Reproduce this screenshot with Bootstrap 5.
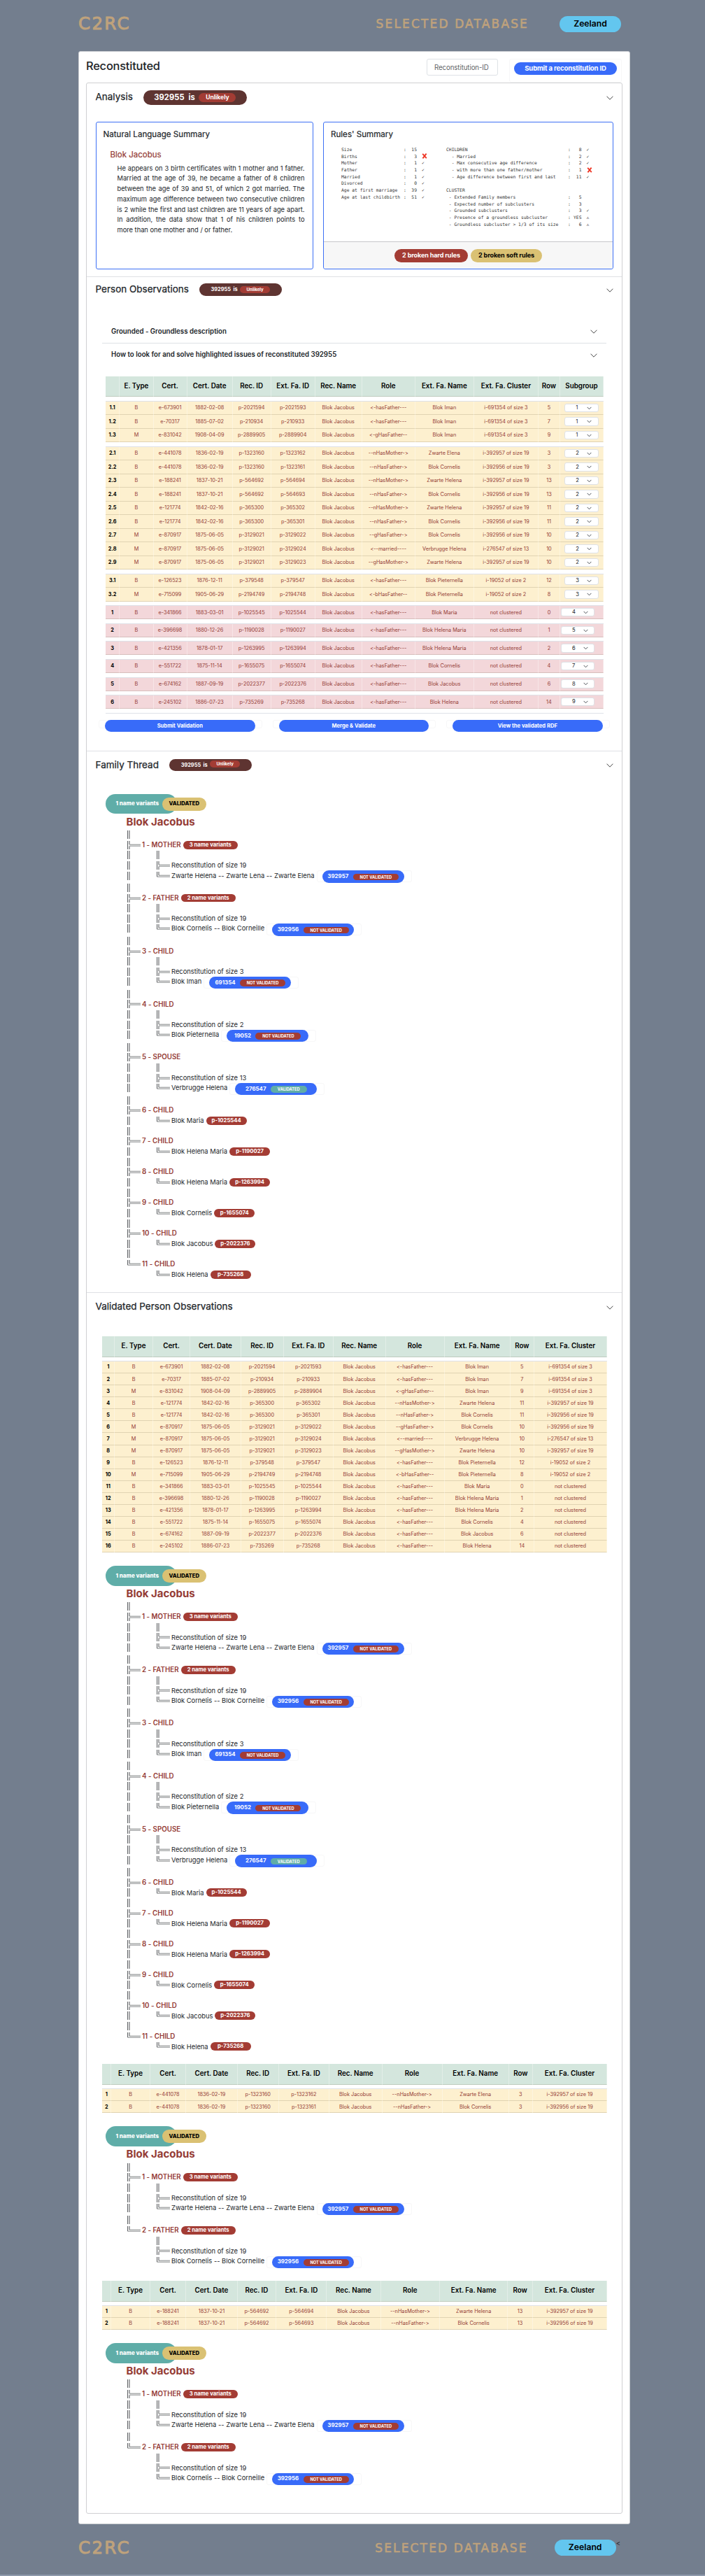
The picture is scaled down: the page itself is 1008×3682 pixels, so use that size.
<!DOCTYPE html>
<html lang="en">
<head>
<meta charset="utf-8">
<meta name="viewport" content="width=device-width, initial-scale=1">
<title>C2RC - Reconstituted 392955</title>
<link href="https://cdn.jsdelivr.net/npm/bootstrap@5.3.0/dist/css/bootstrap.min.css" rel="stylesheet">
<style>
body{background:#737e8e;font-family:Inter,"Liberation Sans",sans-serif;color:#212529;font-size:9.6px;line-height:1.2;font-feature-settings:"calt" 0}
.topbar{height:73px;width:789px;margin:0 auto 0 112px;padding-right:13px}
.brandname,.dbname{font-family:"DejaVu Sans",sans-serif;color:#bfa27c;line-height:1;white-space:nowrap;-webkit-text-stroke:1px #bfa27c}
.brandname{font-size:24.5px;letter-spacing:2.3px}
.dbname{font-size:17px;letter-spacing:2.15px;margin-right:-2px;-webkit-text-stroke-width:.6px}
.dbpill{width:88px;height:23px;border-radius:12px;background:#63c6ef;color:#000;font-weight:600;font-size:12.2px}
.sheet{width:789px;height:3535px;margin-left:112px;border:1px solid #c9ccd0;border-radius:3px;padding:0 10px;background:#fff}
.sheethead{height:43.7px;padding:10px 1px 0 0}
.sheettitle{font-size:16.4px;font-weight:500;padding-top:2px;line-height:1;letter-spacing:-.2px}
.idinput{width:102px;height:24px;font-size:9.7px;padding:0 10px;border-radius:3px;margin-right:16px;letter-spacing:-.1px}
.faint{border:1px solid #f7f7f8;border-radius:3px}
.submitbox{width:161px;height:34px;padding:4px 6px}
.bluebtn{background:#386bf9;color:#fff;border:0;border-radius:10px;font-weight:700;padding:0;line-height:1;display:flex;align-items:center;justify-content:center}
.submitbox .bluebtn{width:147px;height:18px;font-size:9.55px;letter-spacing:-.15px}
.panels{border:1px solid #cfd0d2;border-radius:3px;width:767px;height:3475px}
.panel1{height:277px}.panel2{height:678px}.panel3{height:774.5px}
.panelsec{border-bottom:1px solid #dfe1e5;padding:0 12px 0 12.5px}
.panelsec:last-child{border:0}
.sechead{height:37px}
.secname{font-size:13.5px;font-weight:400;line-height:1;-webkit-text-stroke:.25px #212529}
.chev{width:10px;height:6px;display:block;margin-top:1px}
.verdict{background:#5e3431;color:#fff;font-weight:700;border-radius:12px;white-space:pre;line-height:1}
.verdict b{background:#a33c34;border-radius:8px;font-weight:700}
.verdict.big{width:148px;height:21px;margin-left:15px;font-size:11.1px;letter-spacing:.15px}
.verdict.big b{width:53px;height:13px;font-size:8.5px;letter-spacing:0}
.verdict.sm{width:118px;height:17.5px;font-size:7.4px;margin-left:15px}
.verdict.sm b{width:43px;height:10px;font-size:6.2px}
.bluecard{border:1px solid #3d70f5;border-radius:3px;height:211px;background:#fff}
.bluecard h6{font-size:11.6px;line-height:1;margin:12.5px 0 0 10px;font-weight:400;-webkit-text-stroke:.2px #212529}
.person{color:#943b35;font-size:11.5px;line-height:1;margin:17.5px 0 0 20px;-webkit-text-stroke:.2px #943b35}
.story{margin:6px 11px 0 30px;font-size:9.3px;line-height:14.7px}
.story span{display:block;white-space:nowrap;text-align-last:justify}
.story span:last-child{text-align-last:left}
.rules{font-family:"DejaVu Sans Mono",monospace;font-size:6.35px;line-height:9.75px;color:#333;height:139px;margin-top:10px}
.rl{display:grid;height:9.72px;white-space:pre}
.rleft .rl{grid-template-columns:89px 4px 15px 18px}
.rright .rl{grid-template-columns:174px 4px 15.5px 18px}
.rl i{font-style:normal;text-align:right}
.rl em{font-style:normal;text-align:center;display:flex;align-items:center;justify-content:center}
.rl svg{width:8px;height:8px;margin-left:4px}
.cardfoot{height:39px;border-top:1px solid #c7c8ca;background:#f7f7f7;border-radius:0 0 3px 3px}
.rulepill{height:19px;border-radius:10px;font-size:9px;font-weight:700;letter-spacing:-.1px}
.hardred{background:#a33c34;color:#fff}.softgold{background:#dac173;color:#000}
.helprow{height:33px;padding:0 13px;font-weight:600;font-size:9.7px}
.obs{display:block;line-height:1;font-size:7.3px;color:#943b35;text-align:center}
.obs thead,.obs tbody{display:block}
.obs tr{display:grid;grid-template-columns:var(--cols)}
.obs th,.obs td{min-width:0;display:flex;align-items:center;justify-content:center;white-space:nowrap;border-right:1px solid rgba(255,255,255,.35);border-bottom:1px solid rgba(80,70,40,.17)}
.obs td,.obs th{padding-top:1px}
.obs thead tr{height:29.5px;background:#d4e6dd}
.obs thead th{color:#000;font-size:9.8px;font-weight:600;padding-top:0}
.obs tbody th{color:#000;font-weight:700}
.obs tbody tr{height:19.5px;background:#fdf0cf}
.obs tbody{border-top:1px solid #dfe2e8}
.thin tbody tr{height:17.07px}
.grp1 tbody{margin-bottom:5.5px}
.grp1 tbody tr.rosy{background:#f3d7da;height:19.1px}
.obs .form-select{width:48.5px;height:12.5px;min-height:0;font-size:7.6px;line-height:1;padding:0 0 0 15px;border:1px solid #dfe2e6;border-radius:3px;background-color:#fff;background-size:6.5px;background-position:right 9px center;color:#212529}
.obs tr.rosy td:last-child{justify-content:flex-start}
.thirds{margin:9px 5.5px 0 4.5px}
.thirdbox{width:233.5px;height:12px;padding:0 8px}
.thirdbox .bluebtn{width:214.5px;height:17.5px;margin-top:-1px;font-size:7.6px}
.tree{font-size:9.35px;line-height:1}
.tagrow{height:29px}
.tealpill{width:102px;height:28.5px;background:#5fada8;border-radius:14.5px;color:#fff;font-size:8px;font-weight:800;padding-left:14.5px;margin-right:-21.5px;padding-bottom:2px}
.goldpill{width:63.5px;height:19px;background:#dac173;border-radius:10px;color:#000;font-size:7.7px;font-weight:800}
.focusname{height:22px;padding:3px 0 0 29.5px;font-size:15px;font-weight:700;color:#943b35}
.tl{height:14.66px;padding-left:30px;white-space:pre}
.tl.tall{height:17.3px;align-items:flex-start!important}
.tl.tall>*{margin-top:1.2px}
.tg{width:22px;height:12px;flex:none}
.tsp{width:20px;flex:none}
.kin{color:#943b35;font-weight:600;font-size:9.75px}
.redtag{background:#a33c34;color:#fff;border-radius:6px;height:11.7px;font-size:7.7px;font-weight:700;margin-left:3px}
.redtag.w1{width:78px}.redtag.w2{width:58px}
.linkbox{width:136px;height:17px;padding-left:7px;margin-left:3px;margin-top:0!important}
.linkbox .bluebtn{width:117px;height:17.3px;margin-top:-1px;font-size:7.9px;gap:6.5px;border-radius:9px}
.linkbox i{font-style:normal;font-size:5.7px;background:#a33c34;border-radius:5px;height:9.7px;width:65px;margin-top:1px}
.linkbox i.ok{background:#5fada8;width:51.5px}
.strip{height:2px;background:#8f9aab}
</style>
</head>
<body>
<header class="topbar d-flex align-items-center">
  <div class="brandname me-auto pb-1">C2RC</div>
  <div class="dbname pb-1">SELECTED DATABASE</div>
  <div class="dbpill d-flex align-items-center justify-content-center mb-1" style="margin-left:46px">Zeeland</div>
</header>
<main class="sheet">
  <div class="sheethead d-flex align-items-start">
    <h1 class="sheettitle me-auto mb-0">Reconstituted</h1>
    <input class="form-control idinput" placeholder="Reconstitution-ID">
    <div class="faint submitbox"><button class="bluebtn">Submit a reconstitution ID</button></div>
  </div>
  <div class="panels">
    <section class="panelsec panel1">
      <div class="sechead d-flex align-items-center" style="height:41px">
        <span class="secname">Analysis</span>
        <span class="verdict big d-flex align-items-center justify-content-center">392955  is  <b class="d-flex align-items-center justify-content-center">Unlikely</b></span>
        <svg class="chev ms-auto" viewBox="0 0 10 6"><path d="M.5.7 5 5.2 9.5.7" fill="none" stroke="#444"/></svg>
      </div>
      <div class="d-flex justify-content-between" style="margin-top:14px">
        <div class="bluecard" style="width:311px">
          <h6>Natural Language Summary</h6>
          <div class="person">Blok Jacobus</div>
          <div class="story"><span>He appears on 3 birth certificates with 1 mother and 1 father.</span><span>Married at the age of 39, he became a father of 8 children</span><span>between the age of 39 and 51, of which 2 got married. The</span><span>maximum age difference between two consecutive children</span><span>is 2 while the first and last children are 11 years of age apart.</span><span>In addition, the data show that 1 of his children points to</span><span>more than one mother and / or father.</span></div>
        </div>
        <div class="bluecard d-flex flex-column" style="width:415px">
          <h6>Rules' Summary</h6>
          <div class="rules d-flex" style="padding-left:25px">
            <div class="rleft" id="rleft"></div>
            <div class="rright" id="rright" style="padding-left:24px"></div>
          </div>
          <div class="cardfoot mt-auto d-flex align-items-center justify-content-center" style="gap:4px">
            <span class="rulepill hardred d-flex align-items-center justify-content-center" style="width:105px">2 broken hard rules</span>
            <span class="rulepill softgold d-flex align-items-center justify-content-center" style="width:102px">2 broken soft rules</span>
          </div>
        </div>
      </div>
    </section>
    <section class="panelsec panel2">
      <div class="sechead d-flex align-items-center">
        <span class="secname">Person Observations</span>
        <span class="verdict sm d-flex align-items-center justify-content-center">392955  is  <b class="d-flex align-items-center justify-content-center">Unlikely</b></span>
        <svg class="chev ms-auto" viewBox="0 0 10 6"><path d="M.5.7 5 5.2 9.5.7" fill="none" stroke="#444"/></svg>
      </div>
      <div style="margin:25px 10px 0 9.5px">
        <div class="helprow d-flex align-items-center border-bottom"><span>Grounded - Groundless description</span><svg class="chev ms-auto" viewBox="0 0 10 6"><path d="M.5.7 5 5.2 9.5.7" fill="none" stroke="#444"/></svg></div>
        <div class="helprow d-flex align-items-center"><span>How to look for and solve highlighted issues of reconstituted 392955</span><svg class="chev ms-auto" viewBox="0 0 10 6"><path d="M.5.7 5 5.2 9.5.7" fill="none" stroke="#444"/></svg></div>
      </div>
      <div id="t1" style="margin:14px 0 0 14.5px;width:712px"></div>
      <div class="thirds d-flex justify-content-between">
        <div class="faint thirdbox"><button class="bluebtn">Submit Validation</button></div>
        <div class="faint thirdbox"><button class="bluebtn">Merge &amp; Validate</button></div>
        <div class="faint thirdbox"><button class="bluebtn">View the validated RDF</button></div>
      </div>
    </section>
    <section class="panelsec panel3">
      <div class="sechead d-flex align-items-center" style="height:40px">
        <span class="secname">Family Thread</span>
        <span class="verdict sm d-flex align-items-center justify-content-center">392955  is  <b class="d-flex align-items-center justify-content-center mb-1">Unlikely</b></span>
        <svg class="chev ms-auto" viewBox="0 0 10 6"><path d="M.5.7 5 5.2 9.5.7" fill="none" stroke="#444"/></svg>
      </div>
      <div class="tree" data-full="1" style="margin:21px 0 0 14.5px"></div>
    </section>
    <section class="panelsec">
      <div class="sechead d-flex align-items-center" style="height:40px">
        <span class="secname">Validated Person Observations</span>
        <svg class="chev ms-auto" viewBox="0 0 10 6"><path d="M.5.7 5 5.2 9.5.7" fill="none" stroke="#444"/></svg>
      </div>
      <div id="t2" style="margin:22px 0 0 9.5px;width:722px"></div>
      <div class="tree" data-full="1" style="margin:19px 0 0 14.5px"></div>
      <div id="t3" style="margin:17.7px 0 0 9.5px;width:722px"></div>
      <div class="tree" style="margin:19px 0 0 14.5px"></div>
      <div id="t4" style="margin:18px 0 0 9.5px;width:722px"></div>
      <div class="tree" style="margin:19px 0 0 14.5px"></div>
    </section>
  </div>
</main>
<footer class="topbar d-flex align-items-center" style="height:72px;padding-right:14px">
  <div class="brandname me-auto pb-1">C2RC</div>
  <div class="dbname pb-1">SELECTED DATABASE</div>
  <div class="dbpill d-flex align-items-center justify-content-center" style="margin:0 0 6px 40px">Zeeland</div><span class="pb-3">&lt;</span>
</footer>
<div class="strip"></div>
<script src="https://cdn.jsdelivr.net/npm/bootstrap@5.3.0/dist/js/bootstrap.bundle.min.js"></script>
<script>
// Rule summary lines: label, value, mark (v = passed, x = broken, w = warning)
const marks = {v:'✓', w:'⚠', '':'', x:'<svg viewBox="0 0 8 8"><path d="M1.2.8 6.8 7.2M6.6.6 1.4 7.4" stroke="#ee3524" stroke-width="1.8"/></svg>'};
const ruleLine = r => r ? `<div class="rl"><span>${r[0]}</span><span>${r[1] === '' ? '' : ':'}</span><i>${r[1]}</i><em>${marks[r[2]]}</em></div>` : '<div class="rl"></div>';
rleft.innerHTML = [['Size',15,''],['Births',3,'x'],['Mother',1,'v'],['Father',1,'v'],['Married',1,'v'],['Divorced',0,'v'],['Age at first marriage',39,'v'],['Age at last childbirth',51,'v']].map(ruleLine).join('');
rright.innerHTML = [['CHILDREN',8,'v'],['  - Married',2,'v'],['  - Max consecutive age difference',2,'v'],['  - with more than one father/mother',1,'x'],['  - Age difference between first and last',11,'v'],null,['CLUSTER','',''],[' - Extended Family members',5,''],[' - Expected number of subclusters',3,''],[' - Grounded subclusters',3,'v'],[' - Presence of a groundless subcluster','YES','w'],[' - Groundless subcluster &gt; 1/3 of its size',6,'w']].map(ruleLine).join('');

// Observations: type, cert, date, record, family record, role, family name, cluster, row
const J = 'Blok Jacobus', nc = 'not clustered', hf = '<-hasFather---';
const c1 = 'i-691354 of size 3', c7 = 'i-392957 of size 19', c6 = 'i-392956 of size 19', c3 = 'i-19052 of size 2';
const A = [['B','e-673901','1882-02-08','p-2021594','p-2021593',hf,'Blok Iman',c1,5],
 ['B','e-70317','1885-07-02','p-210934','p-210933',hf,'Blok Iman',c1,7],
 ['M','e-831042','1908-04-09','p-2889905','p-2889904','<-gHasFather--','Blok Iman',c1,9]];
const B1 = [['B','e-441078','1836-02-19','p-1323160','p-1323162','--nHasMother->','Zwarte Elena',c7,3],
 ['B','e-441078','1836-02-19','p-1323160','p-1323161','--nHasFather->','Blok Cornelis',c6,3]];
const B2 = [['B','e-188241','1837-10-21','p-564692','p-564694','--nHasMother->','Zwarte Helena',c7,13],
 ['B','e-188241','1837-10-21','p-564692','p-564693','--nHasFather->','Blok Cornelis',c6,13]];
const B3 = [['B','e-121774','1842-02-16','p-365300','p-365302','--nHasMother->','Zwarte Helena',c7,11],
 ['B','e-121774','1842-02-16','p-365300','p-365301','--nHasFather->','Blok Cornelis',c6,11],
 ['M','e-870917','1875-06-05','p-3129021','p-3129022','--gHasFather->','Blok Cornelis',c6,10],
 ['M','e-870917','1875-06-05','p-3129021','p-3129024','<--married----','Verbrugge Helena','i-276547 of size 13',10],
 ['M','e-870917','1875-06-05','p-3129021','p-3129023','--gHasMother->','Zwarte Helena',c7,10]];
const C = [['B','e-126523','1876-12-11','p-379548','p-379547',hf,'Blok Pieternella',c3,12],
 ['M','e-715099','1905-06-29','p-2194749','p-2194748','<-bHasFather--','Blok Pieternella',c3,8]];
const D = [['B','e-341866','1883-03-01','p-1025545','p-1025544',hf,'Blok Maria',nc,0],
 ['B','e-396698','1880-12-26','p-1190028','p-1190027',hf,'Blok Helena Maria',nc,1],
 ['B','e-421356','1878-01-17','p-1263995','p-1263994',hf,'Blok Helena Maria',nc,2],
 ['B','e-551722','1875-11-14','p-1655075','p-1655074',hf,'Blok Cornelis',nc,4],
 ['B','e-674162','1887-09-19','p-2022377','p-2022376',hf,J,nc,6],
 ['B','e-245102','1886-07-23','p-735269','p-735268',hf,'Blok Helena',nc,14]];
const esc = s => String(s).replace(/</g,'&lt;');
const heads = ['','E. Type','Cert.','Cert. Date','Rec. ID','Ext. Fa. ID','Rec. Name','Role','Ext. Fa. Name'];
const thead = list => `<thead><tr>${list.map(h => `<th>${h}</th>`).join('')}</tr></thead>`;
const cell = v => `<td>${esc(v)}</td>`;
const widths = w => w.map(n => n + 'fr').join(' ');
function grouped(groups){
  let sub = 0;
  const bodies = groups.map(g => {
    sub++;
    return '<tbody>' + g.rows.map((r, i) => `<tr class="${g.rosy ? 'rosy' : ''}"><th>${g.rosy ? sub - 3 : sub + '.' + (i + 1)}</th>${[...r.slice(0,5), J, ...r.slice(5)].map(cell).join('')}<td><select class="form-select"><option>${sub}</option></select></td></tr>`).join('') + '</tbody>';
  }).join('');
  return `<table class="obs grp1" style="--cols:${widths([20.3,48.2,48,65,55,63,67,76,84,92,31,62])}">${thead([...heads,'Ext. Fa. Cluster','Row','Subgroup'])}<tbody class="border-0"></tbody>${bodies}<tbody class="mb-0"></tbody></table>`;
}
function plain(rows, w){
  return `<table class="obs thin" style="--cols:${widths(w)}">${thead([...heads,'Row','Ext. Fa. Cluster'])}<tbody class="border-0" style="height:5.4px"></tbody><tbody>${rows.map((r, i) => `<tr><th>${i + 1}</th>${[...r.slice(0,5), J, r[5], r[6], r[8], r[7]].map(cell).join('')}</tr>`).join('')}</tbody></table>`;
}
t1.innerHTML = grouped([{rows:A},{rows:[...B1,...B2,...B3]},{rows:C},...D.map(r => ({rows:[r], rosy:true}))]);
t2.innerHTML = plain([...A,...B3,...C,...D], [37,109,108,145,123,143,150,169,189,69,209]);
t3.innerHTML = plain(B1, [27,111,104,147,119,145,152,173,191,69,213]);
t4.innerHTML = plain(B2, [27,111,104,147,112,145,155,170,195,72,213]);

// Family tree connectors
const V = '<path d="M1.6 0V12M4 0V12"/>', T = '<path d="M1.6 0V12M4 0V5M4 7.6V12"/><path d="M4 5.2H20M4 7.2H20" stroke="#77797c"/>', L = '<path d="M1.6 0V7.2M4 0V5.2"/><path d="M4 5.2H20M1.6 7.2H20" stroke="#77797c"/>';
const g = p => `<svg class="tg" viewBox="0 0 22 12" fill="none" stroke="#3c3f43" stroke-width=".9">${p}</svg>`;
const line = (html, tall) => `<div class="tl d-flex align-items-center${tall ? ' tall' : ''}">${html}</div>`;
const mid = 'd-flex align-items-center justify-content-center';
const kin = [['MOTHER','Zwarte Helena -- Zwarte Lena -- Zwarte Elena',392957,19,3],['FATHER','Blok Cornelis -- Blok Corneille',392956,19,2],['CHILD','Blok Iman',691354,3],['CHILD','Blok Pieternella',19052,2],['SPOUSE','Verbrugge Helena',276547,13],['CHILD','Blok Maria','p-1025544'],['CHILD','Blok Helena Maria','p-1190027'],['CHILD','Blok Helena Maria','p-1263994'],['CHILD','Blok Cornelis','p-1655074'],['CHILD',J,'p-2022376'],['CHILD','Blok Helena','p-735268']];
document.querySelectorAll('.tree').forEach(el => {
  const list = el.dataset.full ? kin : kin.slice(0, 2);
  let h = `<div class="tagrow d-flex align-items-center"><div class="tealpill d-flex align-items-center">1 name variants</div><div class="goldpill ${mid}">VALIDATED</div></div><div class="focusname">${J}</div>`;
  list.forEach((k, i) => {
    const last = i === list.length - 1, trunk = g(last ? '' : V) + '<span class="tsp"></span>';
    h += line(g(V));
    h += line(g(last ? L : T) + `<span class="kin">${i + 1} - ${k[0]}</span>` + (k[4] ? `<span class="redtag w1 ${mid}">${k[4]} name variants</span>` : ''));
    if (k[3]) {
      h += line(trunk + g(V)) + line(trunk + g(T) + `<span>Reconstitution of size ${k[3]}</span>`);
      const ok = k[2] === 276547;
      h += line(trunk + g(L) + `<span style="padding-top:1px">${k[1]}</span><div class="faint linkbox"><a class="bluebtn text-decoration-none">${k[2]}<i class="${ok ? 'ok ' : ''}${mid}">${ok ? '' : 'NOT '}VALIDATED</i></a></div>`, true);
    } else h += line(trunk + g(L) + `<span>${k[1]}</span><span class="redtag w2 ${mid}">${k[2]}</span>`);
  });
  el.innerHTML = h;
});
</script>
</body>
</html>
